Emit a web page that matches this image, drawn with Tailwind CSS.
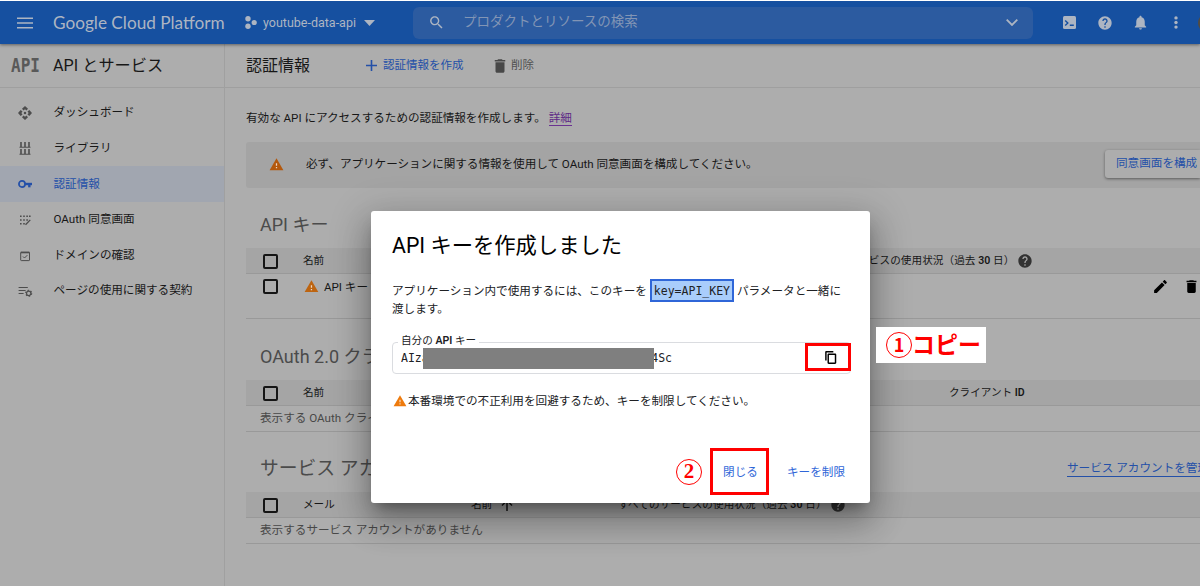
<!DOCTYPE html>
<html lang="ja">

<head>
    <meta charset="UTF-8">
    <meta name="viewport" content="width=device-width, initial-scale=1.0">
    <title>認証情報 - API とサービス</title>
    <script src="https://cdn.jsdelivr.net/npm/@tailwindcss/browser@4"></script>
</head>

<body class="relative w-[1200px] h-[586px] overflow-hidden bg-[#adadad] font-[Roboto,'Noto_Sans_CJK_JP',sans-serif] text-[11.6px] text-[#171717] whitespace-nowrap">

    <!-- Icons -->
    <svg class="hidden">
        <symbol id="warning" viewBox="0 0 24 24"><path d="M1 21h22L12 2 1 21z" fill="currentColor"/><path d="M11 16h2v2h-2zM11 10h2v4h-2z" fill="#fff" fill-opacity=".75"/></symbol>
        <symbol id="help" viewBox="0 0 24 24"><path fill="currentColor" d="M12 2C6.48 2 2 6.48 2 12s4.48 10 10 10 10-4.48 10-10S17.52 2 12 2zm1 17h-2v-2h2v2zm2.07-7.75l-.9.92C13.45 12.9 13 13.5 13 15h-2v-.5c0-1.1.45-2.1 1.17-2.83l1.24-1.26c.37-.36.59-.86.59-1.41 0-1.1-.9-2-2-2s-2 .9-2 2H8c0-2.21 1.79-4 4-4s4 1.79 4 4c0 .88-.36 1.68-.93 2.25z"/></symbol>
        <symbol id="delete" viewBox="0 0 24 24"><path fill="currentColor" d="M6 19c0 1.1.9 2 2 2h8c1.1 0 2-.9 2-2V7H6v12zM19 4h-3.5l-1-1h-5l-1 1H5v2h14V4z"/></symbol>
    </svg>

    <!-- Top bar -->
    <header class="relative z-10 flex items-center h-[44px] border-t border-white bg-[#1650a0] text-[#adb5c2] shadow-[0_1px_3px_rgba(0,0,0,.45)]">
        <svg class="ml-[17px] w-4 h-3 shrink-0" viewBox="0 0 16 12" stroke="currentColor" stroke-width="1.6"><path d="M0 1.2h16M0 6h16M0 10.8h16"/></svg>
        <div class="ml-5 w-[192px] shrink-0 pt-px font-[Lato,sans-serif] text-[17.2px]">Google Cloud Platform</div>
        <svg class="w-3 h-[13px] shrink-0" viewBox="0 0 12 13" fill="currentColor"><circle cx="3" cy="2.8" r="2.7"/><circle cx="3" cy="10.2" r="2.7"/><circle cx="9.2" cy="6.5" r="2.6"/></svg>
        <div class="ml-[6px] w-[100px] shrink-0 pt-px text-[12.5px]">youtube-data-api</div>
        <svg class="ml-px mt-px w-[11px] h-[6px] shrink-0" viewBox="0 0 11 6" fill="currentColor"><path d="M0 0h11L5.500 6z"/></svg>
        <div class="ml-[38px] flex items-center w-[620px] shrink-0 h-8 rounded-md bg-[#2c5ba0]">
            <svg class="ml-[15px] w-[17px] h-[17px]" viewBox="0 0 24 24" fill="currentColor"><path d="M15.500 14h-.79l-.28-.27C15.410 12.590 16 11.110 16 9.500 16 5.910 13.090 3 9.500 3S3 5.910 3 9.500 5.910 16 9.500 16c1.610 0 3.090-.59 4.230-1.570l.27.28v.79l5 4.990L20.490 19l-4.990-5zm-6 0C7.010 14 5 11.990 5 9.500S7.010 5 9.500 5 14 7.010 14 9.500 11.990 14 9.500 14z"/></svg>
            <div class="ml-[18px] mb-[2px] text-[13.5px] text-[#8295b5]">プロダクトとリソースの検索</div>
            <svg class="ml-auto mr-[15px] w-3 h-[7px]" viewBox="0 0 12 7" fill="none" stroke="currentColor" stroke-width="1.8"><path d="M.7.7 6 6 11.300.7"/></svg>
        </div>
        <svg class="ml-[30px] w-[13px] h-[13px] shrink-0" viewBox="0 0 13 13"><rect width="13" height="13" rx="1.500" fill="currentColor"/><path d="M2.200 4.500 4.800 7 2.200 9.500M6.800 9.200h4" fill="none" stroke="#1650a0" stroke-width="1.400"/></svg>
        <svg class="ml-[21px] w-4 h-4 shrink-0"><use href="#help"/></svg>
        <svg class="ml-[19px] w-[17px] h-[17px] shrink-0" viewBox="0 0 24 24" fill="currentColor"><path d="M12 22c1.100 0 2-.9 2-2h-4c0 1.100.89 2 2 2zm6-6v-5c0-3.070-1.640-5.640-4.500-6.320V4c0-.83-.67-1.500-1.500-1.500s-1.500.67-1.500 1.500v.68C7.630 5.360 6 7.920 6 11v5l-2 2v1h16v-1l-2-2z"/></svg>
        <svg class="ml-[25px] w-1 h-[13px] shrink-0" viewBox="0 0 4 13" fill="currentColor"><circle cx="2" cy="1.900" r="1.700"/><circle cx="2" cy="6.500" r="1.700"/><circle cx="2" cy="11.100" r="1.700"/></svg>
        <div class="ml-[20px] w-5 h-5 shrink-0 rounded-full bg-[#514b42]"></div>
    </header>

    <div class="flex h-[542px]">
        <!-- Side menu -->
        <aside class="w-[225px] shrink-0 border-r border-[#a0a0a0]">
            <div class="flex items-center h-[44px] border-b border-[#9f9f9f]">
                <div class="ml-[11px] w-[42px] scale-y-[1.25] font-['DejaVu_Sans_Mono',monospace] font-bold text-[16px] text-[#595959]">API</div>
                <div class="pt-px text-[16.2px]">API とサービス</div>
            </div>
            <nav class="flex flex-col pt-[7px]">
                <a class="flex items-center h-[35.600px] pl-[17px] gap-[20.500px]">
                    <svg class="w-4 h-4" viewBox="0 0 24 24" fill="#4d4d4d"><path d="M12 1.500 7.500 5.500 9.800 8.300 12 6.500l2.200 1.800 2.300-2.800zM12 22.500l4.500-4-2.300-2.800-2.200 1.800-2.200-1.800-2.300 2.800zM1.500 12l4 4.500 2.800-2.300L6.500 12l1.800-2.200-2.800-2.300zM22.500 12l-4-4.500-2.800 2.300 1.800 2.200-1.800 2.200 2.800 2.300z"/><circle cx="12" cy="12" r="1.900"/></svg>
                    ダッシュボード
                </a>
                <a class="flex items-center h-[35.600px] pl-[17px] gap-[20.500px]">
                    <svg class="w-4 h-4" viewBox="0 0 16 16" stroke="#4d4d4d" fill="none"><path d="M2.500 7.300h11M2.500 14.300h11" stroke-width="1.100"/><path d="M4 2v5M8 2v5M12 2v5M4 9v5M8 9v5M12 9v5" stroke-width="1.600"/></svg>
                    ライブラリ
                </a>
                <a class="flex items-center h-[36px] pl-[17px] gap-[20.500px] bg-[#a1a6b0] text-[#2450a8]">
                    <svg class="w-4 h-4" viewBox="0 0 24 24" fill="none" stroke="currentColor"><circle cx="7.500" cy="12" r="4.600" stroke-width="2.600"/><path d="M12 12h10.500" stroke-width="3.600"/><path d="M18.500 12v5" stroke-width="3.600"/></svg>
                    <span class="pt-px">認証情報</span>
                </a>
                <a class="flex items-center h-[35.600px] pl-[17px] gap-[20.500px]">
                    <svg class="w-4 h-4" viewBox="0 0 16 16" fill="#4d4d4d"><path d="M3 3.500h1.600v1.600H3zM6.200 3.500h1.600v1.600H6.200zM9.300 3.500h1.600v1.600H9.300zM12 3.500h1.600v1.600H12zM3 7.200h1.600v1.600H3zM6.200 7.200h1.600v1.600H6.200zM9.300 7.200h1.600v1.600H9.300zM3 11h1.600v1.600H3zM6.200 11h1.600v1.600H6.200z"/><path d="m8.500 12.700 4.800-4.800" stroke="#4d4d4d" stroke-width="1.300"/></svg>
                    OAuth 同意画面
                </a>
                <a class="flex items-center h-[35.600px] pl-[17px] gap-[20.500px]">
                    <svg class="w-4 h-4" viewBox="0 0 16 16" fill="none" stroke="#4d4d4d"><rect x="3.700" y="4.300" width="8.800" height="8.300" rx=".6"/><path d="M3.700 4.500h8.800" stroke-width="1.600"/><path d="m6 8.500 1.500 1.500 2.900-2.900"/></svg>
                    ドメインの確認
                </a>
                <a class="flex items-center h-[35.600px] pl-[17px] gap-[20.500px]">
                    <svg class="w-4 h-4" viewBox="0 0 16 16" fill="none" stroke="#4d4d4d" stroke-width="1.200"><path d="M1.600 4.500h9.200M1.600 7.500h7M1.600 10.500h5"/><circle cx="11.700" cy="10.300" r="2.200"/><circle cx="11.700" cy="10.300" r="3" stroke-width="1.100" stroke-dasharray="1.600 1.540"/></svg>
                    ページの使用に関する契約
                </a>
            </nav>
        </aside>

        <main class="w-[975px] shrink-0">
            <div class="flex items-center h-[44px] pl-[21px] border-b border-[#9f9f9f]">
                <h1 class="w-[119px] text-[16px]">認証情報</h1>
                <svg class="ml-px w-[11px] h-[11px]" viewBox="0 0 11 11" stroke="#2450a8" stroke-width="1.600"><path d="M5.500 0v11M0 5.500h11"/></svg>
                <span class="ml-[6px] w-[108px] text-[11.5px] text-[#2450a8]">認証情報を作成</span>
                <svg class="w-[18px] h-[18px] text-[#484848]"><use href="#delete"/></svg>
                <span class="ml-[2px] text-[11.5px] text-[#505050]">削除</span>
            </div>

            <div class="pl-[21px]">
                <p class="flex items-center h-[54px] pt-[7px] gap-[6px] tracking-[-0.02px]">有効な API にアクセスするための認証情報を作成します。 <a class="-ml-[3px] leading-[14px] border-b border-[#6a3391] text-[#5f2a86]">詳細</a></p>
                <div class="flex items-center h-[46px] rounded-l-[3px] bg-[#a4a4a4]">
                    <svg class="ml-[23px] mb-px w-[15px] h-[15px] text-[#b3580d]"><use href="#warning"/></svg>
                    <span class="ml-[22px] tracking-[-0.03px]">必ず、アプリケーションに関する情報を使用して OAuth 同意画面を構成してください。</span>
                    <span class="ml-auto mb-[3px] flex items-center w-[95px] h-[28px] pl-[11px] rounded-l-[3px] bg-[#adadad] text-[#2450a8] shadow-[0_1px_3px_rgba(0,0,0,.45)]">同意画面を構成</span>
                </div>

                <!-- API keys -->
                <h2 class="flex items-center h-[60px] pt-[13px] pl-[14px] text-[18px] text-[#4b4b4b]">API キー</h2>
                <div class="flex items-center h-[26px] pl-[17px] border-b border-[#999] bg-[#a5a5a5] text-[10.600px]">
                    <span class="mt-px w-[15px] h-[15px] rounded-[2px] border-2 border-[#151515]"></span>
                    <span class="ml-[25px] w-[503px]">名前</span>
                    <span class="tracking-[0.07px]">すべてのサービスの使用状況（過去 <b class="font-semibold">30</b> 日）</span>
                    <svg class="ml-[3px] w-4 h-4 text-[#333]"><use href="#help"/></svg>
                </div>
                <div class="flex h-[45px] pt-[5px] pl-[17px] border-b border-[#999]">
                    <span class="w-[15px] h-[15px] rounded-[2px] border-2 border-[#151515]"></span>
                    <svg class="ml-[26px] w-[15px] h-[15px] text-[#bd6410]"><use href="#warning"/></svg>
                    <span class="ml-[5px] w-[832px] leading-[16px]">API キー 1</span>
                    <svg class="-mt-px w-[17px] h-[17px] shrink-0" viewBox="0 0 24 24"><path d="M3 17.250V21h3.750L17.810 9.940l-3.750-3.750L3 17.250zM20.710 7.040c.39-.39.39-1.020 0-1.410l-2.340-2.340c-.39-.39-1.020-.39-1.410 0l-1.830 1.830 3.750 3.750 1.830-1.830z"/></svg>
                    <svg class="-mt-px ml-[14px] w-[17px] h-[17px] shrink-0 text-black"><use href="#delete"/></svg>
                </div>

                <!-- OAuth clients -->
                <h2 class="flex items-center h-[61px] pt-[14px] pl-[14px] text-[18px] text-[#4b4b4b]">OAuth 2.0 クライアント ID</h2>
                <div class="flex items-center h-[26px] pl-[17px] border-b border-[#999] bg-[#a5a5a5] text-[10.600px]">
                    <span class="mt-px w-[15px] h-[15px] rounded-[2px] border-2 border-[#151515]"></span>
                    <span class="ml-[25px] w-[646px]">名前</span>
                    <span>クライアント <b class="font-semibold">ID</b></span>
                </div>
                <div class="flex items-center h-[26px] pl-[14px] border-b border-[#999] text-[#484848]">表示する OAuth クライアントがありません</div>

                <!-- Service accounts -->
                <div class="flex items-center justify-between h-[60px] pt-[14px] pl-[14px]">
                    <h2 class="pt-px text-[18.800px] text-[#4b4b4b]">サービス アカウント</h2>
                    <a class="w-[133px] leading-[15px] border-b border-[#2450a8] text-[#2450a8]">サービス アカウントを管理</a>
                </div>
                <div class="flex items-center h-[26px] pl-[17px] border-b border-[#999] bg-[#a5a5a5] text-[10.600px]">
                    <span class="mt-px w-[15px] h-[15px] rounded-[2px] border-2 border-[#151515]"></span>
                    <span class="ml-[25px] w-[168px]">メール</span>
                    <span>名前</span>
                    <svg class="ml-[9px] w-[12px] h-[12px]" viewBox="0 0 12 12" fill="none" stroke="#151515" stroke-width="1.500"><path d="M6 12V1.500M1 6.500l5-5 5 5"/></svg>
                    <span class="ml-[105px] tracking-[0.07px]">すべてのサービスの使用状況（過去 <b class="font-semibold">30</b> 日）</span>
                    <svg class="ml-[3px] w-4 h-4 text-[#333]"><use href="#help"/></svg>
                </div>
                <div class="flex items-center h-[26px] pl-[14px] border-b border-[#999] text-[#484848]">表示するサービス アカウントがありません</div>
            </div>
        </main>
    </div>

    <!-- Dialog -->
    <div class="absolute z-20 left-[371px] top-[211px] w-[499px] h-[292px] px-[21px] rounded-[3px] bg-white text-[#202124] shadow-[0_9px_13px_-6px_rgba(0,0,0,.35),0_20px_32px_3px_rgba(0,0,0,.2),0_8px_38px_7px_rgba(0,0,0,.16)]">
        <h3 class="pt-[19px] text-[21.300px] leading-[31px] text-black">API キーを作成しました</h3>
        <p class="pt-[20px] leading-[18px]">
            <span class="flex items-center h-[19px]">アプリケーション内で使用するには、このキーを<code class="ml-[3px] mr-[3px] h-[23px] px-[2px] border-2 border-[#2f66d8] bg-[#a9cdfb] font-['DejaVu_Sans_Mono',monospace] text-[11.500px] leading-[20px]">key=API_KEY</code>パラメータと一緒に</span>
            渡します。
        </p>
        <div class="relative flex items-center mt-[24px] w-[459px] h-[32px] rounded border border-[#dadce0] font-['DejaVu_Sans_Mono',monospace] text-[11.500px]">
            <span class="absolute left-[5px] top-[-9px] px-[3px] bg-white font-[Roboto,'Noto_Sans_CJK_JP',sans-serif] text-[10.600px] leading-[14px]">自分の <b class="font-semibold">API</b> キー</span>
            <span class="ml-[8px] w-[22px] leading-[14px] overflow-hidden">AIza</span>
            <span class="w-[231px] h-[21px] mt-px bg-[#7f7f7f]"></span>
            <span class="flex justify-end w-[18px] leading-[14px] overflow-hidden">4Sc</span>
            <span class="absolute left-[412px] top-0 flex items-center justify-center w-[46px] h-[28px] pl-[5px] border-[3px] border-[#f00]">
                <svg class="w-[14px] h-[15px]" viewBox="0 0 24 24"><path d="M16 1H4c-1.100 0-2 .9-2 2v14h2.500V3.500H16V1zm3 4H8c-1.100 0-2 .9-2 2v14c0 1.100.9 2 2 2h11c1.100 0 2-.9 2-2V7c0-1.100-.9-2-2-2zm-.5 15.500h-10v-13h10v13z"/></svg>
            </span>
        </div>
        <div class="flex items-center h-[18px] mt-[18px] pl-px">
            <svg class="mr-px w-[14px] h-[14px] text-[#ee7a0c]"><use href="#warning"/></svg>
            <span class="pt-px">本番環境での不正利用を回避するため、キーを制限してください。</span>
        </div>
        <div class="flex items-center mt-[38px] pl-[284px] h-[47px] text-[#2f66d8]">
            <span class="flex items-center justify-center w-[26px] h-[26px] rounded-full border-[1.500px] border-[#f00] font-['Liberation_Serif',serif] font-bold text-[21px] leading-none text-[#f00]">2</span>
            <span class="ml-[8px] flex items-center justify-center w-[59px] h-[47px] pl-[2px] pt-[2px] border-[3px] border-[#f00]">閉じる</span>
            <span class="ml-[18px] pt-[2px]">キーを制限</span>
        </div>
    </div>

    <!-- Step label -->
    <div class="absolute z-20 left-[876px] top-[327px] w-[110px] h-[36px] pl-[10px] flex items-center bg-white text-[#f00] font-['Noto_Sans_CJK_JP',sans-serif] font-bold">
        <span class="flex items-center justify-center w-[26px] h-[26px] pb-[2px] rounded-full border-[1.500px] border-[#f00] text-[18px] leading-none">1</span>
        <span class="pb-[3px] text-[23px] leading-none">コピー</span>
    </div>

</body>

</html>
